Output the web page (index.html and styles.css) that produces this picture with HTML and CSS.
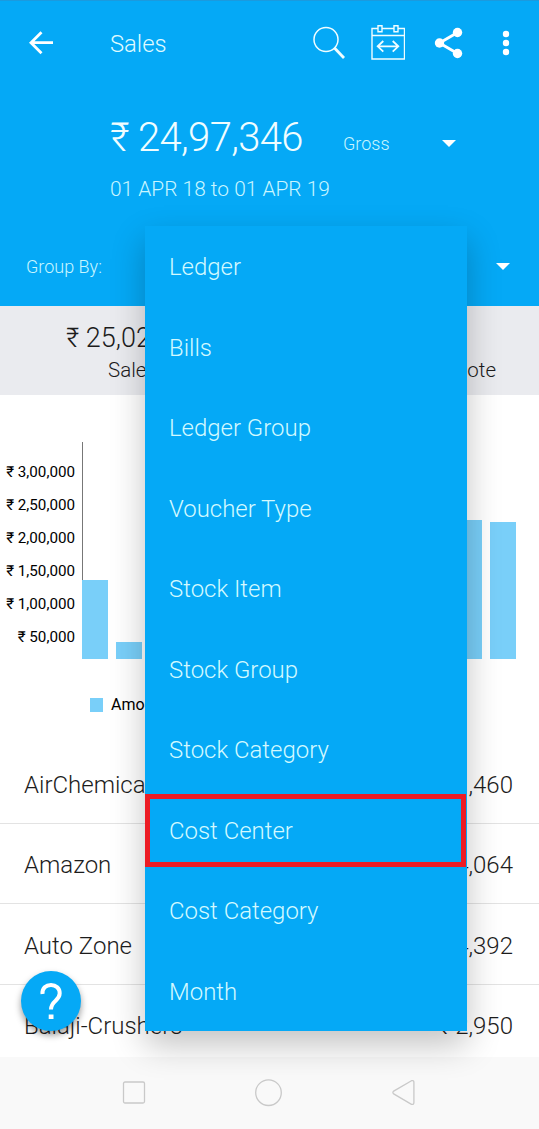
FILE: index.html
```
<!DOCTYPE html>
<html lang="en">
<head>
<meta charset="utf-8">
<title>Sales</title>
<link rel="stylesheet" href="styles.css">
</head>
<body>
<div class="screen">
  <header class="header">
    <div class="appbar">
      <svg class="icon-back" width="26" height="26" viewBox="0 0 26 26"><path d="M25 12.700H3M13.500 2.200L3 12.700l10.500 10.500" fill="none" stroke="#fff" stroke-width="2.800"/></svg>
      <h1 class="title">Sales</h1>
      <svg width="34" height="36" viewBox="0 0 34 36" fill="none" stroke="#f0fdff"><circle cx="15" cy="14.500" r="12" stroke-width="1.500"/><path d="M23.500 23L33 33" stroke-width="2.800"/></svg>
      <svg class="icon-calendar" width="34" height="36" viewBox="0 0 34 36" fill="none" stroke="#f0fdff" stroke-width="1.400"><path d="M7 3.500H1V34h32.500V3.500H27M11 3.500h12M1 10.500h32.500M7 .7h4v6H7zM23 .7h4v6h-4z"/><path d="M6.500 21.300h21M12.300 16l-5.600 5.300 5.600 5.300M21.700 16l5.600 5.300-5.600 5.300" stroke-width="1.800"/></svg>
      <svg class="icon-share" width="30" height="32" viewBox="0 0 30 32"><path d="M23.500 5.500L5.500 16l18 10.500" fill="none" stroke="#fff" stroke-width="2.900"/><circle cx="23.500" cy="5.500" r="4.700" fill="#fff"/><circle cx="5.500" cy="16" r="4.700" fill="#fff"/><circle cx="23.500" cy="26.500" r="4.700" fill="#fff"/></svg>
      <svg class="icon-more" width="8" height="26" viewBox="0 0 8 26" fill="#fff"><circle cx="4" cy="4" r="3.200"/><circle cx="4" cy="13" r="3.200"/><circle cx="4" cy="22" r="3.200"/></svg>
    </div>
    <div class="total">
      <span class="amount">₹ 24,97,346</span>
      <span class="mode">Gross</span>
      <i class="caret"></i>
    </div>
    <div class="period">01 APR 18 to 01 APR 19</div>
    <div class="group-by"><span>Group By:</span><i class="caret"></i></div>
  </header>

  <section class="summary">
    <div class="summary-sales"><b>₹ 25,02</b><span>Sales</span></div>
    <div class="summary-note"><span>Credit Note</span></div>
  </section>

  <section class="chart">
    <div class="plot">
      <div class="scale">
        <span>₹ 3,00,000</span><span>₹ 2,50,000</span><span>₹ 2,00,000</span><span>₹ 1,50,000</span><span>₹ 1,00,000</span><span>₹ 50,000</span>
      </div>
      <div class="bars">
        <i class="bar" style="height:79px"></i>
        <i class="bar" style="height:17px"></i>
        <i class="bar bar-late" style="height:139px"></i>
        <i class="bar" style="height:137px"></i>
      </div>
    </div>
    <div class="legend"><i></i>Amount</div>
  </section>

  <section class="list">
    <div class="row"><span>AirChemicals</span><span>₹ 1,460</span></div>
    <div class="row"><span>Amazon</span><span>₹ 4,064</span></div>
    <div class="row"><span>Auto Zone</span><span>₹ 4,392</span></div>
    <div class="row"><span>Balaji-Crushers</span><span>₹ 2,950</span></div>
  </section>

  <nav class="navbar">
    <svg width="24" height="28" viewBox="0 0 24 28"><rect x="1.500" y="3" width="21" height="21" rx="1.500"/></svg>
    <svg width="28" height="28" viewBox="0 0 28 28"><circle cx="13.500" cy="13.700" r="12.800"/></svg>
    <svg width="24" height="28" viewBox="0 0 24 28"><path d="M19.500 1.700L1.700 12.100Q.1 13.500 1.700 14.900L19.500 25.300q2.400.6 2.400-1.800V3.500q0-2.400-2.400-1.800z"/></svg>
  </nav>

  <div class="help">
    <svg width="24" height="38" viewBox="0 0 24 38"><path d="M3.500 12C3 6 7 3 12 3s8.700 3.400 8.700 8.300c0 7.700-8.700 7.200-8.700 16.200" fill="none" stroke="#fff" stroke-width="4"/><path d="M9.700 32.500h4.800v4.500H9.700z" fill="#fff"/></svg>
  </div>

  <ul class="menu">
    <li>Ledger</li>
    <li>Bills</li>
    <li>Ledger Group</li>
    <li>Voucher Type</li>
    <li>Stock Item</li>
    <li>Stock Group</li>
    <li>Stock Category</li>
    <li class="marked">Cost Center</li>
    <li>Cost Category</li>
    <li>Month</li>
  </ul>
</div>
</body>
</html>
```
FILE: styles.css
```
*, *::after { box-sizing: border-box; }
body { margin: 0; font-family: Roboto, "Noto Sans", sans-serif; font-weight: 300; color: #1c1c1c; }
.screen { position: relative; width: 539px; height: 1129px; overflow: hidden; background: #fff; display: flex; flex-direction: column; }
svg { display: block; flex: none; }

.header { height: 306px; flex: none; background: #05a9f6; border-top: 1px solid #1b9ade; color: #c9f6ff; }
.appbar { height: 84px; display: flex; align-items: center; padding: 0 29px 0 28px; }
.title { margin: 0 auto 0 56px; padding-top: 2px; font-size: 23.800px; font-weight: 300; color: #dffaff; line-height: 30px; }
.icon-calendar { margin-left: 26px; }
.icon-share { margin-left: 29px; }
.icon-more { margin-left: 38px; }

.total { display: flex; align-items: center; height: 103px; padding-left: 110px; }
.amount { width: 233px; padding-top: 2px; font-size: 40px; letter-spacing: -.65px; color: #f0fdff; }
.mode { width: 99px; font-size: 18px; padding-top: 13px; }
.caret { width: 0; height: 0; border: 7.5px solid transparent; border-top-color: #fff; border-bottom: 0; }
.total .caret { margin-top: 13px; }
.period { padding-left: 110px; line-height: 24px; font-size: 20.900px; margin-top: -11px; }
.group-by { display: flex; align-items: center; justify-content: space-between; margin-top: 54px; line-height: 24px; font-size: 18px; padding: 0 29px 0 26px; }
.group-by .caret { margin-top: -1px; }

.summary { height: 89px; flex: none; background: #eaebef; display: flex; justify-content: space-between; padding-top: 15px; }
.summary-sales { padding-left: 66px; display: flex; flex-direction: column; }
.summary b { font-size: 27px; line-height: 34px; font-weight: 300; }
.summary span { font-size: 20.5px; line-height: 30px; }
.summary-sales span { padding-left: 42px; }
.summary-note { padding: 34px 43px 0 0; }

.chart { height: 349px; flex: none; padding-top: 47px; color: #000; font-weight: 400; }
.plot { display: flex; height: 217px; }
.scale { width: 82px; padding: 14px 7px 0 0; display: flex; flex-direction: column; text-align: right; font-size: 15.200px; line-height: 32.900px; white-space: nowrap; }
.bars { width: 434px; border-left: 1px solid #777; display: flex; align-items: flex-end; gap: 8px; }
.bar { width: 26px; background: #79cff9; }
.bar:first-child { margin-left: -1px; }
.bar-late { margin-left: auto; }
.legend { display: flex; align-items: center; gap: 8px; padding: 36px 0 0 90px; font-size: 16px; line-height: 20px; }
.legend i { width: 13px; height: 14px; background: #79cff9; }

.list { height: 313px; flex: none; overflow: hidden; margin-top: -1px; }
.list + .navbar { margin-top: 1px; }
.row { height: 80.500px; border-bottom: 1px solid #e3e3e3; display: flex; align-items: center; justify-content: space-between; padding: 4px 26px 0 24px; font-size: 24px; }

.navbar { height: 72px; flex: none; background: #f9f9f9; display: flex; align-items: center; padding-left: 122px; }
.navbar svg { fill: none; stroke: #c9c9c9; stroke-width: 1.300; }
.navbar svg + svg { margin-left: 109px; }

.help { position: absolute; left: 21px; top: 971px; width: 60px; height: 60px; border-radius: 50%; background: #05a9f6; box-shadow: 0 4px 7px rgba(0, 0, 0, .4); display: flex; align-items: center; justify-content: center; }

.menu { position: absolute; left: 145px; top: 226px; width: 322px; margin: 0; padding: 0; list-style: none; background: #05a9f6; color: #d3f9ff; box-shadow: 0 14px 32px rgba(0, 0, 0, .24); }
.menu li { height: 80.500px; padding-left: 24px; display: flex; align-items: center; font-size: 23.950px; padding-top: 2px; }
.menu .marked { position: relative; }
.menu .marked::after { content: ""; position: absolute; left: 0; right: 1px; top: 4.500px; height: 73px; border: 5px solid #ec1c24; }
```
